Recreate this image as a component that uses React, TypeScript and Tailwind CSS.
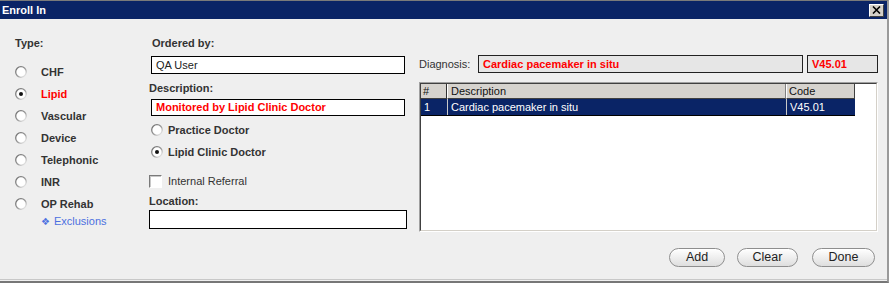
import React from 'react';

function Radio({ checked = false }: { checked?: boolean }) {
  return (
    <svg width="12" height="12" viewBox="0 0 12 12" className="shrink-0">
      <defs>
        <linearGradient id="rb" x1="0" y1="0" x2="1" y2="1">
          <stop offset="0%" stopColor="#6a6a6a" />
          <stop offset="55%" stopColor="#9a9a9a" />
          <stop offset="100%" stopColor="#ffffff" />
        </linearGradient>
      </defs>
      <circle cx="6" cy="6" r="5.3" fill="#ffffff" stroke="url(#rb)" strokeWidth="1.3" />
      {checked && <circle cx="6" cy="6" r="2" fill="#111111" />}
    </svg>
  );
}

function TypeRow({ label, checked, red }: { label: string; checked?: boolean; red?: boolean }) {
  return (
    <div className="flex h-[22px] items-center gap-[14px]">
      <Radio checked={checked} />
      <span className={`text-[11px] font-bold leading-[13px] ${red ? 'text-[#ff0000]' : 'text-[#333333]'}`}>
        {label}
      </span>
    </div>
  );
}

function PillButton({ label, width }: { label: string; width: string }) {
  return (
    <button
      className={`${width} h-[19px] rounded-full border border-[#8e8e8e] bg-linear-to-b from-white to-[#dedede] text-[12.5px] leading-[17px] text-[#222222] shadow-[inset_0_1px_0_#ffffff]`}
    >
      {label}
    </button>
  );
}

export default function App() {
  return (
    <div className="w-[889px] h-[283px] overflow-hidden border-t border-r-2 border-t-[#7a7a7a] border-r-[#9a9a9a] border-b-2 border-b-[#777777] bg-[#efefef] font-['Liberation_Sans',Arial,sans-serif]">
      {/* Title bar */}
      <div className="flex h-[18px] items-center justify-between bg-[#0a2466] pl-[2px] pr-[3px]">
        <span className="text-[11px] font-bold leading-[13px] text-white">Enroll In</span>
        <div className="flex h-[13px] w-[15px] items-center justify-center border border-t-white border-l-white border-r-[#404040] border-b-[#404040] bg-[#d4d0c8]">
          <svg width="9" height="8" viewBox="0 0 9 8">
            <path d="M1 0.5l7 7M8 0.5l-7 7" stroke="#000" strokeWidth="1.6" />
          </svg>
        </div>
      </div>

      {/* Body */}
      <div className="flex h-[261px] border-b border-b-[#c8c8c8]">
        {/* Type column */}
        <div className="w-[149px] shrink-0 pl-[15px] pt-[18px]">
          <div className="text-[11px] font-bold leading-[13px] text-[#333333]">Type:</div>
          <div className="mt-[11px]">
            <TypeRow label="CHF" />
            <TypeRow label="Lipid" checked red />
            <TypeRow label="Vascular" />
            <TypeRow label="Device" />
            <TypeRow label="Telephonic" />
            <TypeRow label="INR" />
            <TypeRow label="OP Rehab" />
          </div>
          <div className="flex items-center gap-[4px] pl-[26px] text-[11px] leading-[13px] text-[#4c70e0]">
            <span className="font-['DejaVu_Sans',sans-serif] text-[10px] leading-[13px]">❖</span>
            <span>Exclusions</span>
          </div>
        </div>

        {/* Order column */}
        <div className="w-[270px] shrink-0 pt-[18px]">
          <div className="pl-[3px] text-[11px] font-bold leading-[13px] text-[#333333]">Ordered by:</div>
          <div className="ml-[2px] mt-[6px] flex h-[18px] w-[254px] items-center border border-black bg-white pl-[4px] text-[11px] text-[#222222]">
            QA User
          </div>
          <div className="mt-[8px] text-[11px] font-bold leading-[13px] text-[#333333]">Description:</div>
          <div className="ml-[2px] mt-[4px] flex h-[17px] w-[254px] items-center border border-black bg-white pl-[4px] text-[11px] font-bold text-[#ff0000]">
            Monitored by Lipid Clinic Doctor
          </div>
          <div className="ml-[2px] mt-[3px]">
            <div className="flex h-[22px] items-center gap-[5px]">
              <Radio />
              <span className="text-[11px] font-bold text-[#333333]">Practice Doctor</span>
            </div>
            <div className="flex h-[22px] items-center gap-[5px]">
              <Radio checked />
              <span className="text-[11px] font-bold text-[#333333]">Lipid Clinic Doctor</span>
            </div>
          </div>
          <div className="mt-[12px] flex h-[13px] items-center gap-[6px]">
            <div className="h-[13px] w-[13px] border border-t-[#7a7a7a] border-l-[#7a7a7a] border-r-white border-b-white bg-white shadow-[inset_1px_1px_0_#c8c8c8]" />
            <span className="text-[11px] leading-[13px] text-[#333333]">Internal Referral</span>
          </div>
          <div className="mt-[7px] text-[11px] font-bold leading-[13px] text-[#333333]">Location:</div>
          <div className="mt-[2px] h-[19px] w-[258px] border border-black bg-white" />
        </div>

        {/* Diagnosis column */}
        <div className="flex-1 pt-[36px]">
          <div className="flex h-[18px] items-center">
            <span className="w-[59px] text-[11px] text-[#333333]">Diagnosis:</span>
            <div className="flex h-[18px] w-[325px] items-center border border-[#222222] bg-[#e6e6e6] pl-[4px] text-[11px] font-bold text-[#ff0000]">
              Cardiac pacemaker in situ
            </div>
            <div className="ml-[4px] flex h-[18px] w-[71px] items-center border border-[#222222] bg-[#e6e6e6] pl-[4px] text-[11px] font-bold text-[#ff0000]">
              V45.01
            </div>
          </div>

          {/* Diagnosis list */}
          <div className="mt-[9px] h-[150px] w-[459px] border border-t-[#a0a0a0] border-l-[#a0a0a0] border-r-white border-b-white">
            <div className="h-full w-full border border-t-[#404040] border-l-[#404040] border-r-[#d4d0c8] border-b-[#d4d0c8] bg-white">
              <div className="flex h-[15px] text-[11px] leading-[14px] text-[#111111]">
                <div className="w-[26px] border-r border-b border-r-[#303030] border-b-[#404040] bg-[#d6d3ce] pl-[2px]">#</div>
                <div className="w-[339px] border-r border-b border-l border-l-white border-r-[#808080] border-b-[#404040] bg-[#d6d3ce] pl-[3px]">Description</div>
                <div className="w-[69px] border-r border-b border-l border-l-white border-r-[#404040] border-b-[#404040] bg-[#d6d3ce] pl-[2px]">Code</div>
              </div>
              <div className="flex h-[17px] w-[434px] border-b border-b-black bg-[#0a2466] text-[11px] leading-[16px] text-white">
                <div className="w-[26px] pl-[3px]">1</div>
                <div className="w-[339px] border-l border-l-[#c8c8c8] pl-[3px]">Cardiac pacemaker in situ</div>
                <div className="w-[69px] border-l border-l-[#c8c8c8] pl-[3px]">V45.01</div>
              </div>
            </div>
          </div>

          {/* Buttons */}
          <div className="mt-[16px] flex justify-end pr-[12px]">
            <PillButton label="Add" width="w-[56px]" />
            <div className="w-[12px]" />
            <PillButton label="Clear" width="w-[61px]" />
            <div className="w-[14px]" />
            <PillButton label="Done" width="w-[63px]" />
          </div>
        </div>
      </div>
    </div>
  );
}
